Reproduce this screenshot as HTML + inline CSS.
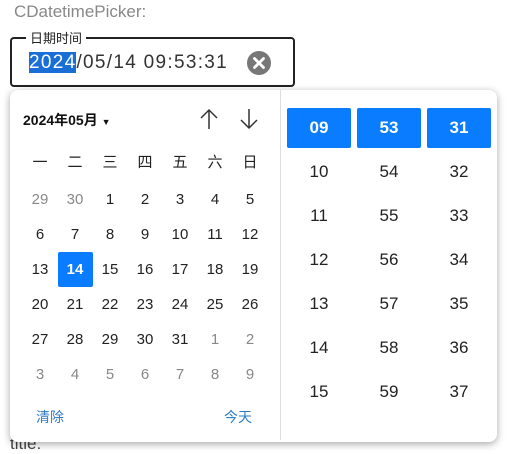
<!DOCTYPE html>
<html><head><meta charset="utf-8"><style>
*{margin:0;padding:0;box-sizing:border-box}
body{width:509px;height:450px;background:#fff;position:relative;overflow:hidden;font-family:"Liberation Sans","Noto Sans CJK SC",sans-serif;color:#222}
.a{position:absolute}
.lbl{left:14px;top:2px;font-size:17px;color:#888}
.inp{left:10px;top:37px;width:285px;height:50px;border:2px solid #222;border-radius:4px}
.leg{left:26px;top:28px;background:#fff;padding:0 4px;font-size:13px;color:#222}
.val{left:29px;top:51px;font-size:19px;letter-spacing:1.3px;color:#333;line-height:24px}
.val span{background:#1a6fd6;color:#fff}
.clr{left:247px;top:51px;width:24px;height:24px;border-radius:50%;background:#777}
.pop{left:10px;top:90px;width:487px;height:352px;background:#fff;border-radius:8px;box-shadow:0 2px 8px rgba(0,0,0,.35)}
.div{left:280px;top:90px;width:1px;height:350px;background:#ddd}
.c{width:35px;text-align:center;font-size:15px;line-height:35px;height:35px}
.g{color:#888}
.t{width:64px;text-align:center;font-size:17px;line-height:40px;height:40px}
.sel{background:#0a7cff;color:#fff;font-weight:bold;border-radius:2px}
.lnk{color:#2f7bc4;font-size:14px}
.title{left:10px;top:434px;font-size:17px;color:#444}
</style></head><body>
<div class="a title">title:</div>
<div class="a lbl">CDatetimePicker:</div>
<div class="a inp"></div>
<div class="a leg">日期时间</div>
<div class="a val"><span>2024</span>/05/14 09:53:31</div>
<div class="a clr"><svg width="24" height="24"><path d="M7.5 7.5L16.5 16.5M16.5 7.5L7.5 16.5" stroke="#fff" stroke-width="2.8" stroke-linecap="round"/></svg></div>
<div class="a pop"></div>
<div class="a div"></div>
<div class="a" style="left:23px;top:110px;font-size:14px;font-weight:bold;color:#111">2024年05月 <span style="font-size:9px">▼</span></div>
<svg class="a" style="left:199px;top:108px" width="20" height="22"><path d="M10 21V2M2 10L10 2L18 10" stroke="#333" stroke-width="1.5" fill="none"/></svg>
<svg class="a" style="left:239px;top:108px" width="20" height="22"><path d="M10 1V20M2 12L10 20L18 12" stroke="#333" stroke-width="1.5" fill="none"/></svg>
<div id="cal"></div>
<div id="tm"></div>
<div class="a lnk" style="left:36px;top:407px">清除</div>
<div class="a lnk" style="left:224px;top:407px">今天</div>
<script>
var h='',wd=['一','二','三','四','五','六','日'];
for(var i=0;i<7;i++)h+='<div class="a c" style="left:'+(22.5+35*i)+'px;top:145px">'+wd[i]+'</div>';
var d=[29,30];for(var i=1;i<=31;i++)d.push(i);for(var i=1;i<=9;i++)d.push(i);
for(var k=0;k<42;k++){var r=Math.floor(k/7),c=k%7,g=(k<2||k>32)?' g':'',s=(k==15)?' sel':'';
h+='<div class="a c'+g+s+'" style="left:'+(22.5+35*c)+'px;top:'+(182+35*r)+'px">'+d[k]+'</div>';}
document.getElementById('cal').innerHTML=h;
var t='',cols=[9,53,31],x=[287,357,427];
for(var c=0;c<3;c++)for(var r=0;r<7;r++){var v=cols[c]+r,s=r==0?' sel':'';
t+='<div class="a t'+s+'" style="left:'+x[c]+'px;top:'+(108+44*r)+'px">'+(v<10?'0'+v:v)+'</div>';}
document.getElementById('tm').innerHTML=t;
</script>
</body></html>
